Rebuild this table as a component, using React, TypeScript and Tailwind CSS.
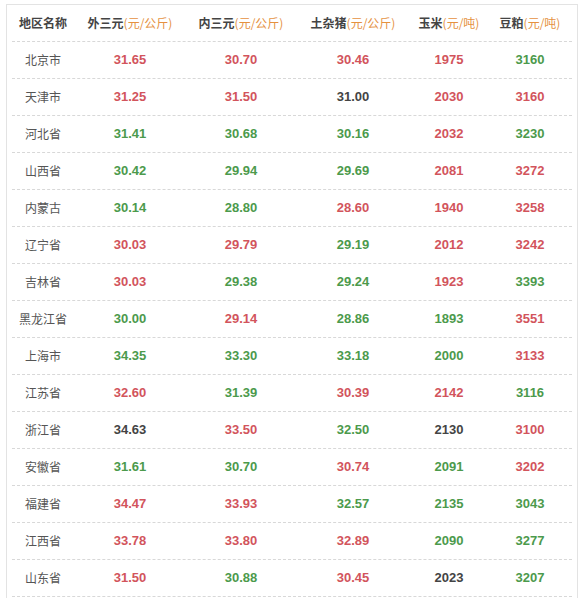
import * as React from "react"

type Tone = "r" | "g" | "d"

interface Row {
  name: string
  cells: [string, Tone][]
}

const rows: Row[] = [
  { name: "北京市", cells: [["31.65", "r"], ["30.70", "r"], ["30.46", "r"], ["1975", "r"], ["3160", "g"]] },
  { name: "天津市", cells: [["31.25", "r"], ["31.50", "r"], ["31.00", "d"], ["2030", "r"], ["3160", "r"]] },
  { name: "河北省", cells: [["31.41", "g"], ["30.68", "g"], ["30.16", "g"], ["2032", "r"], ["3230", "g"]] },
  { name: "山西省", cells: [["30.42", "g"], ["29.94", "g"], ["29.69", "g"], ["2081", "r"], ["3272", "r"]] },
  { name: "内蒙古", cells: [["30.14", "g"], ["28.80", "g"], ["28.60", "r"], ["1940", "r"], ["3258", "r"]] },
  { name: "辽宁省", cells: [["30.03", "r"], ["29.79", "r"], ["29.19", "g"], ["2012", "r"], ["3242", "r"]] },
  { name: "吉林省", cells: [["30.03", "r"], ["29.38", "g"], ["29.24", "g"], ["1923", "r"], ["3393", "g"]] },
  { name: "黑龙江省", cells: [["30.00", "g"], ["29.14", "r"], ["28.86", "g"], ["1893", "g"], ["3551", "r"]] },
  { name: "上海市", cells: [["34.35", "g"], ["33.30", "g"], ["33.18", "g"], ["2000", "g"], ["3133", "r"]] },
  { name: "江苏省", cells: [["32.60", "r"], ["31.39", "g"], ["30.39", "r"], ["2142", "r"], ["3116", "g"]] },
  { name: "浙江省", cells: [["34.63", "d"], ["33.50", "r"], ["32.50", "g"], ["2130", "d"], ["3100", "r"]] },
  { name: "安徽省", cells: [["31.61", "g"], ["30.70", "g"], ["30.74", "r"], ["2091", "g"], ["3202", "r"]] },
  { name: "福建省", cells: [["34.47", "r"], ["33.93", "r"], ["32.57", "g"], ["2135", "g"], ["3043", "g"]] },
  { name: "江西省", cells: [["33.78", "r"], ["33.80", "r"], ["32.89", "r"], ["2090", "g"], ["3277", "g"]] },
  { name: "山东省", cells: [["31.50", "r"], ["30.88", "g"], ["30.45", "r"], ["2023", "d"], ["3207", "g"]] },
]

const toneClass: Record<Tone, string> = {
  r: "text-[#d2545c]",
  g: "text-[#4c9a4c]",
  d: "text-[#444444]",
}

const headers: [string, string][] = [
  ["外三元", "(元/公斤)"],
  ["内三元", "(元/公斤)"],
  ["土杂猪", "(元/公斤)"],
  ["玉米", "(元/吨)"],
  ["豆粕", "(元/吨)"],
]

const gridCols = "grid grid-cols-[62px_112px_110px_114px_78px_84px]"

export default function App() {
  return (
    <div className="w-[584px] h-[598px] overflow-hidden bg-white pt-[4px] pl-[6px] font-['Noto_Sans_CJK_SC',sans-serif]">
      <div className="w-[572px] border border-[#e3e3e3] px-[5px] pb-[20px]">
        {/* header */}
        <div className={`${gridCols} h-[37px] items-center border-b border-dashed border-[#d8d8d8] text-[12px]`}>
          <div className="text-center font-bold text-[#444]">地区名称</div>
          {headers.map(([label, unit]) => (
            <div key={label} className="text-center whitespace-nowrap">
              <span className="font-bold text-[#444]">{label}</span>
              <span className="text-[#e5913f]">{unit}</span>
            </div>
          ))}
        </div>

        {rows.map((row) => (
          <div
            key={row.name}
            className={`${gridCols} h-[37px] items-center border-b border-dashed border-[#d8d8d8]`}
          >
            <div className="text-center text-[12px] text-[#555]">{row.name}</div>
            {row.cells.map(([value, tone], i) => (
              <div
                key={i}
                className={`text-center text-[13px] font-bold font-['Liberation_Sans',sans-serif] ${toneClass[tone]}`}
              >
                {value}
              </div>
            ))}
          </div>
        ))}
      </div>
    </div>
  )
}
